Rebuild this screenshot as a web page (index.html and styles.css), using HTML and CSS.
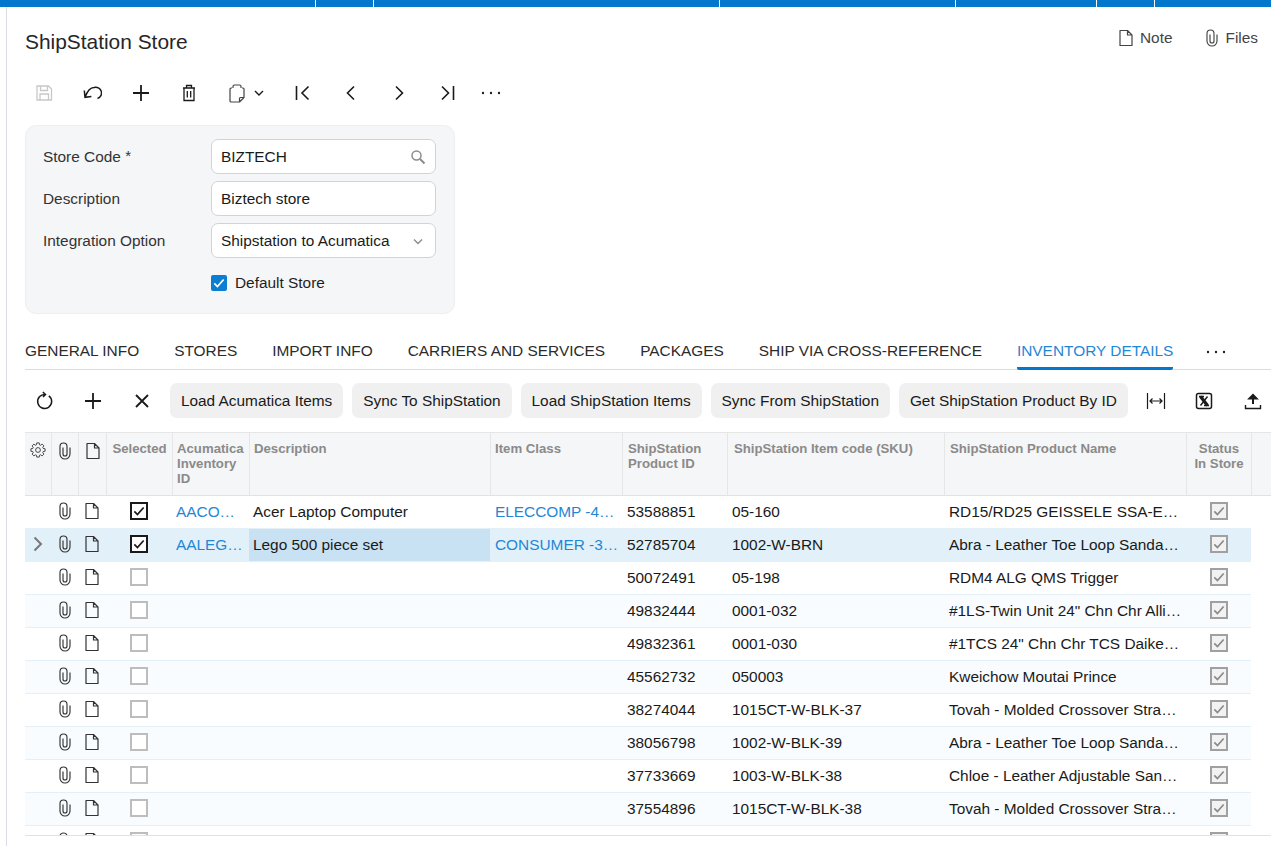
FILE: index.html
```html
<!DOCTYPE html>
<html lang="en">
<head>
<meta charset="UTF-8">
<title>ShipStation Store</title>
<link rel="stylesheet" href="styles.css">
</head>
<body>

<svg class="sprite" width="0" height="0">
  <symbol id="i-clip" viewBox="0 0 16 18"><path d="M13 5.500V12a5 5 0 0 1-10 0V4.500a3.500 3.500 0 0 1 7 0V12a2 2 0 0 1-4 0V5.500" fill="none" stroke="currentColor" stroke-width="1.150"/></symbol>
  <symbol id="i-file" viewBox="0 0 16 18"><path d="M2 1.500h7.500l4.500 4.500v10.500H2zM9.500 1.500V6H14" fill="none" stroke="currentColor" stroke-width="1.200" stroke-linejoin="round"/></symbol>
  <symbol id="i-check" viewBox="0 0 18 18"><path d="M3 9.500l4 4 8-9" fill="none" stroke="currentColor" stroke-width="2.200"/></symbol>
  <symbol id="i-dots" viewBox="0 0 20 4"><circle cx="2" cy="2" r="1.200"/><circle cx="10" cy="2" r="1.200"/><circle cx="18" cy="2" r="1.200"/></symbol>
</svg>

<div class="topbar">
  <span></span><span></span><span></span><span></span><span></span><span></span><span></span>
</div>

<div class="page">

  <!-- titulo -->
  <div class="title-row">
    <h1>ShipStation Store</h1>
    <div class="title-links">
      <a><svg class="ico16"><use href="#i-file"/></svg>Note</a>
      <a><svg class="ico16"><use href="#i-clip"/></svg>Files</a>
    </div>
  </div>

  <div class="main-toolbar">
    <button class="tool disabled"><svg viewBox="0 0 20 20"><path d="M3 3h11.500l3 3v11H3zM6.500 3v4.500h7V3M6 17v-6h8.500v6" fill="none" stroke="currentColor" stroke-width="1.300"/></svg></button>
    <button class="tool"><svg viewBox="0 0 20 20"><path d="M2.300 7.500l.7 6.800 6.400-.8M3 14.300C5 9 8.500 4.500 12 4.500a5.500 5.500 0 0 1 3.500 11" fill="none" stroke="currentColor" stroke-width="1.500"/></svg></button>
    <button class="tool"><svg viewBox="0 0 20 20"><path d="M10 2v16M2 10h16" fill="none" stroke="currentColor" stroke-width="1.800"/></svg></button>
    <button class="tool"><svg viewBox="0 0 20 20"><path d="M4 5h12M7.500 5V2.500h5V5M5 5v12.500h10V5M8.300 8v6.500M11.700 8v6.500" fill="none" stroke="currentColor" stroke-width="1.300"/></svg></button>
    <button class="tool tool-wide"><svg viewBox="0 0 20 20"><path d="M5 5H4a1 1 0 0 0-1 1v12a1 1 0 0 0 1 1h8.500L17 14.500V6a1 1 0 0 0-1-1h-1M6 5V3.500A1.500 1.500 0 0 1 7.500 2h5A1.500 1.500 0 0 1 14 3.500V5M17 14.500h-3.500a1 1 0 0 0-1 1V19" fill="none" stroke="#444" stroke-width="1.200" stroke-linejoin="round"/></svg><svg class="chev" viewBox="0 0 10 10"><path d="M1 3l4 4 4-4" fill="none" stroke="currentColor" stroke-width="1.400"/></svg></button>
    <button class="tool"><svg viewBox="0 0 20 20"><path d="M3.500 3v14M15.500 3.500L9 10l6.500 6.500" fill="none" stroke="currentColor" stroke-width="1.600"/></svg></button>
    <button class="tool"><svg viewBox="0 0 20 20"><path d="M13 3.500L6.500 10l6.500 6.500" fill="none" stroke="currentColor" stroke-width="1.600"/></svg></button>
    <button class="tool"><svg viewBox="0 0 20 20"><path d="M7 3.500l6.500 6.500L7 16.500" fill="none" stroke="currentColor" stroke-width="1.600"/></svg></button>
    <button class="tool"><svg viewBox="0 0 20 20"><path d="M15.500 3v14M4 3.500l6.500 6.500L4 16.500" fill="none" stroke="currentColor" stroke-width="1.600"/></svg></button>
    <button class="tool tool-more"><svg class="dots"><use href="#i-dots"/></svg></button>
  </div>

  <!-- cabecalho do formulario -->
  <div class="form-panel">
    <div class="form-row">
      <label>Store Code <sup>*</sup></label>
      <div class="field"><span>BIZTECH</span>
        <svg class="field-ico" viewBox="0 0 16 16"><circle cx="6.500" cy="6.500" r="4.500" fill="none" stroke="#8c8c8c" stroke-width="1.500"/><path d="M10 10l4.500 4.500" stroke="#8c8c8c" stroke-width="2"/></svg>
      </div>
    </div>
    <div class="form-row">
      <label>Description</label>
      <div class="field"><span>Biztech store</span></div>
    </div>
    <div class="form-row">
      <label>Integration Option</label>
      <div class="field"><span>Shipstation to Acumatica</span>
        <svg class="field-ico" viewBox="0 0 16 16"><path d="M4 6.500l4 4 4-4" fill="none" stroke="#8c8c8c" stroke-width="1.400"/></svg>
      </div>
    </div>
    <div class="form-row check-row">
      <span class="blue-check"><svg viewBox="0 0 18 18"><use href="#i-check"/></svg></span>
      <span>Default Store</span>
    </div>
  </div>

  <div class="tabs">
    <a>GENERAL INFO</a>
    <a>STORES</a>
    <a>IMPORT INFO</a>
    <a>CARRIERS AND SERVICES</a>
    <a>PACKAGES</a>
    <a>SHIP VIA CROSS-REFERENCE</a>
    <a class="active">INVENTORY DETAILS</a>
    <svg class="dots tabs-more"><use href="#i-dots"/></svg>
  </div>

  <div class="grid-toolbar">
    <button class="tool"><svg viewBox="0 0 20 20"><path d="M13.800 4.800A7 7 0 1 1 10.500 3.500M7.800 1l2.700 2.500L8 6" fill="none" stroke="currentColor" stroke-width="1.500"/></svg></button>
    <button class="tool"><svg viewBox="0 0 20 20"><path d="M10 2v16M2 10h16" fill="none" stroke="currentColor" stroke-width="1.800"/></svg></button>
    <button class="tool"><svg viewBox="0 0 20 20"><path d="M4 4l12 12M16 4L4 16" fill="none" stroke="currentColor" stroke-width="1.800"/></svg></button>
    <button class="btn first">Load Acumatica Items</button>
    <button class="btn">Sync To ShipStation</button>
    <button class="btn">Load ShipStation Items</button>
    <button class="btn">Sync From ShipStation</button>
    <button class="btn">Get ShipStation Product By ID</button>
    <button class="tool after"><svg viewBox="0 0 20 20"><path d="M1.500 2v16M18.500 2v16M4 10h12M6.500 7.500L4 10l2.500 2.500M13.500 7.500L16 10l-2.500 2.500" fill="none" stroke="currentColor" stroke-width="1.200"/></svg></button>
    <button class="tool"><svg viewBox="0 0 20 20"><rect x="2.500" y="2.500" width="15" height="15" rx="2" fill="none" stroke="currentColor" stroke-width="1.500"/><path d="M6.500 5.500l7 9" stroke="currentColor" stroke-width="3.200"/><path d="M13.500 5.500l-7 9M5 5.500h5M10 14.500h5" stroke="currentColor" stroke-width="1.400"/></svg></button>
    <button class="tool"><svg viewBox="0 0 20 20"><path d="M10 13V4M6.500 7.500L10 4l3.500 3.500z" fill="currentColor" stroke="currentColor" stroke-width="2"/><path d="M2.500 14v3.500h15V14" fill="none" stroke="currentColor" stroke-width="1.400"/></svg></button>
  </div>

  <div class="grid-wrap">
    <table class="grid">
      <colgroup>
        <col class="c-icon"><col class="c-clip"><col class="c-note"><col class="c-sel"><col class="c-inv"><col class="c-desc"><col class="c-class"><col class="c-pid"><col class="c-sku"><col class="c-name"><col class="c-status"><col>
      </colgroup>
      <thead>
        <tr>
          <th class="center"><svg class="gear" viewBox="0 0 20 20"><circle cx="10" cy="10" r="3" fill="none" stroke="currentColor" stroke-width="1.100"/><path d="M8.120 3.460L8.440 1.140H11.560L11.880 3.460L13.300 4.050L15.160 2.630L17.370 4.840L15.950 6.700L16.540 8.120L18.860 8.440V11.560L16.540 11.880L15.950 13.300L17.370 15.160L15.160 17.370L13.300 15.950L11.880 16.540L11.560 18.860H8.440L8.120 16.540L6.700 15.950L4.840 17.370L2.630 15.160L4.050 13.300L3.460 11.880L1.140 11.560V8.440L3.460 8.120L4.050 6.700L2.630 4.840L4.840 2.630L6.700 4.050z" fill="none" stroke="currentColor" stroke-width="1.100" stroke-linejoin="round"/></svg></th>
          <th class="center"><svg class="ico16"><use href="#i-clip"/></svg></th>
          <th class="center"><svg class="ico16"><use href="#i-file"/></svg></th>
          <th class="center">Selected</th>
          <th>Acumatica Inventory ID</th>
          <th>Description</th>
          <th>Item Class</th>
          <th>ShipStation Product ID</th>
          <th>ShipStation Item code (SKU)</th>
          <th>ShipStation Product Name</th>
          <th class="center">Status<br>In Store</th>
          <th></th>
        </tr>
      </thead>
      <tbody>
        <tr>
          <td></td><td class="center"><svg class="ico16"><use href="#i-clip"/></svg></td><td class="center"><svg class="ico16"><use href="#i-file"/></svg></td>
          <td class="center"><span class="cb on"><svg viewBox="0 0 18 18"><use href="#i-check"/></svg></span></td>
          <td class="link">AACO…</td><td>Acer Laptop Computer</td><td class="link">ELECCOMP -4…</td>
          <td>53588851</td><td>05-160</td><td>RD15/RD25 GEISSELE SSA-E…</td>
          <td class="center"><span class="cb ro"><svg viewBox="0 0 18 18"><use href="#i-check"/></svg></span></td>
        </tr>
        <tr class="current">
          <td class="center"><svg class="row-arrow" viewBox="0 0 12 18"><path d="M2.500 2.500L9 9l-6.500 6.500" fill="none" stroke="currentColor" stroke-width="2"/></svg></td><td class="center"><svg class="ico16"><use href="#i-clip"/></svg></td><td class="center"><svg class="ico16"><use href="#i-file"/></svg></td>
          <td class="center"><span class="cb on"><svg viewBox="0 0 18 18"><use href="#i-check"/></svg></span></td>
          <td class="link">AALEG…</td><td class="active-cell">Lego 500 piece set</td><td class="link">CONSUMER -3…</td>
          <td>52785704</td><td>1002-W-BRN</td><td>Abra - Leather Toe Loop Sanda…</td>
          <td class="center"><span class="cb ro"><svg viewBox="0 0 18 18"><use href="#i-check"/></svg></span></td>
        </tr>
        <tr>
          <td></td><td class="center"><svg class="ico16"><use href="#i-clip"/></svg></td><td class="center"><svg class="ico16"><use href="#i-file"/></svg></td>
          <td class="center"><span class="cb"></span></td><td></td><td></td><td></td>
          <td>50072491</td><td>05-198</td><td>RDM4 ALG QMS Trigger</td>
          <td class="center"><span class="cb ro"><svg viewBox="0 0 18 18"><use href="#i-check"/></svg></span></td>
        </tr>
        <tr class="alt">
          <td></td><td class="center"><svg class="ico16"><use href="#i-clip"/></svg></td><td class="center"><svg class="ico16"><use href="#i-file"/></svg></td>
          <td class="center"><span class="cb"></span></td><td></td><td></td><td></td>
          <td>49832444</td><td>0001-032</td><td>#1LS-Twin Unit 24" Chn Chr Alli…</td>
          <td class="center"><span class="cb ro"><svg viewBox="0 0 18 18"><use href="#i-check"/></svg></span></td>
        </tr>
        <tr>
          <td></td><td class="center"><svg class="ico16"><use href="#i-clip"/></svg></td><td class="center"><svg class="ico16"><use href="#i-file"/></svg></td>
          <td class="center"><span class="cb"></span></td><td></td><td></td><td></td>
          <td>49832361</td><td>0001-030</td><td>#1TCS 24" Chn Chr TCS Daike…</td>
          <td class="center"><span class="cb ro"><svg viewBox="0 0 18 18"><use href="#i-check"/></svg></span></td>
        </tr>
        <tr class="alt">
          <td></td><td class="center"><svg class="ico16"><use href="#i-clip"/></svg></td><td class="center"><svg class="ico16"><use href="#i-file"/></svg></td>
          <td class="center"><span class="cb"></span></td><td></td><td></td><td></td>
          <td>45562732</td><td>050003</td><td>Kweichow Moutai Prince</td>
          <td class="center"><span class="cb ro"><svg viewBox="0 0 18 18"><use href="#i-check"/></svg></span></td>
        </tr>
        <tr>
          <td></td><td class="center"><svg class="ico16"><use href="#i-clip"/></svg></td><td class="center"><svg class="ico16"><use href="#i-file"/></svg></td>
          <td class="center"><span class="cb"></span></td><td></td><td></td><td></td>
          <td>38274044</td><td>1015CT-W-BLK-37</td><td>Tovah - Molded Crossover Stra…</td>
          <td class="center"><span class="cb ro"><svg viewBox="0 0 18 18"><use href="#i-check"/></svg></span></td>
        </tr>
        <tr class="alt">
          <td></td><td class="center"><svg class="ico16"><use href="#i-clip"/></svg></td><td class="center"><svg class="ico16"><use href="#i-file"/></svg></td>
          <td class="center"><span class="cb"></span></td><td></td><td></td><td></td>
          <td>38056798</td><td>1002-W-BLK-39</td><td>Abra - Leather Toe Loop Sanda…</td>
          <td class="center"><span class="cb ro"><svg viewBox="0 0 18 18"><use href="#i-check"/></svg></span></td>
        </tr>
        <tr>
          <td></td><td class="center"><svg class="ico16"><use href="#i-clip"/></svg></td><td class="center"><svg class="ico16"><use href="#i-file"/></svg></td>
          <td class="center"><span class="cb"></span></td><td></td><td></td><td></td>
          <td>37733669</td><td>1003-W-BLK-38</td><td>Chloe - Leather Adjustable San…</td>
          <td class="center"><span class="cb ro"><svg viewBox="0 0 18 18"><use href="#i-check"/></svg></span></td>
        </tr>
        <tr class="alt">
          <td></td><td class="center"><svg class="ico16"><use href="#i-clip"/></svg></td><td class="center"><svg class="ico16"><use href="#i-file"/></svg></td>
          <td class="center"><span class="cb"></span></td><td></td><td></td><td></td>
          <td>37554896</td><td>1015CT-W-BLK-38</td><td>Tovah - Molded Crossover Stra…</td>
          <td class="center"><span class="cb ro"><svg viewBox="0 0 18 18"><use href="#i-check"/></svg></span></td>
        </tr>
        <tr>
          <td></td><td class="center"><svg class="ico16"><use href="#i-clip"/></svg></td><td class="center"><svg class="ico16"><use href="#i-file"/></svg></td>
          <td class="center"><span class="cb"></span></td><td></td><td></td><td></td>
          <td></td><td></td><td></td>
          <td class="center"><span class="cb ro"><svg viewBox="0 0 18 18"><use href="#i-check"/></svg></span></td>
        </tr>
      </tbody>
    </table>
  </div>

</div>

</body>
</html>
```

FILE: styles.css
```css
* { box-sizing: border-box; }
html, body { margin: 0; height: 846px; overflow: hidden; }
body { font-family: "Liberation Sans", Arial, sans-serif; font-size: 15.400px; color: #1f1f1f; background: white; }
.sprite { position: absolute; }
svg { display: block; }
button { font: inherit; color: inherit; background: none; border: none; padding: 0; }

.topbar { display: grid; grid-template-columns: 316px 58px 346px 236px 141px 58px 1fr; height: 7px; }
.topbar span { background: #0277cc; border-right: 1px solid white; }
.topbar span:last-child { border-right: none; }

.page { height: 839px; margin-left: 6px; border-left: 1px solid #dadce6; padding-left: 18px; display: flex; flex-direction: column; }

.title-row { height: 54px; padding-top: 21px; display: flex; justify-content: space-between; }
h1 { margin: 0; font-size: 20.900px; font-weight: normal; line-height: 28px; color: #262626; }
.title-links { display: flex; gap: 31px; padding: 0 13px 0 0; height: 20px; color: #444; }
.title-links a { display: flex; align-items: center; gap: 6px; }
.ico16 { width: 16px; height: 18px; }
.dots { width: 20px; height: 4px; fill: #222; }

.main-toolbar { height: 64px; display: flex; align-items: center; margin-left: -5px; }
.tool { width: 48.300px; height: 24px; display: flex; align-items: center; justify-content: center; color: #1a1a1a; flex: none; }
.tool svg { width: 20px; height: 20px; }
.tool.disabled { color: #c8c8c8; }
.tool svg.chev { width: 10px; height: 10px; margin-left: 7px; }
.tool-wide { width: 65.500px; padding-left: 14px; justify-content: flex-start; }
.tool svg.dots { width: 20px; height: 4px; }
.tool-more { width: 38px; }

.form-panel { width: 430px; height: 189px; background: #f5f6f8; border: 1px solid #eeeff1; border-radius: 11px; padding: 13px 18px 0 17px; flex: none; }
.form-row { display: flex; align-items: center; height: 35px; margin-bottom: 7px; }
.form-row label { width: 168px; flex: none; color: #333; }
.form-row sup { font-size: 15px; line-height: 0; vertical-align: 1px; }
.field { width: 225px; height: 35px; background: white; border: 1px solid #d2d3d6; border-radius: 7px; padding: 0 9px; display: flex; align-items: center; justify-content: space-between; color: #1a1a1a; flex: none; }
.field-ico { width: 16px; height: 16px; flex: none; }
.check-row { padding-left: 168px; margin-top: 15px; height: 20px; gap: 8px; }
.blue-check { width: 16px; height: 16px; background: #0b7ed2; border-radius: 2px; color: white; padding: 1px; }
.blue-check svg { width: 14px; height: 14px; }

.tabs { margin-top: 18px; height: 38px; width: 1246px; border-bottom: 1px solid #dcdcdc; display: flex; gap: 35px; flex: none; font-size: 15.410px; }
.tabs a { height: 38px; line-height: 38px; color: #2b2b2b; white-space: nowrap; }
.tabs a.active { color: #1f87d6; border-bottom: 3px solid #0277cc; border-radius: 2px; }
.tabs-more { margin-top: 18px; margin-left: -2px; }

.grid-toolbar { height: 62px; padding-bottom: 1px; display: flex; align-items: center; flex: none; margin-left: -4px; }
.btn { height: 35px; padding: 0 11px; background: #f0f0f0; border-radius: 7px; margin-right: 8.900px; color: #1a1a1a; white-space: nowrap; flex: none; }
.btn.first { margin-left: 4px; }
.tool.after { margin-left: -5px; }

.grid-wrap { height: 404px; width: 1246px; overflow: hidden; border-bottom: 1px solid #e2e2e2; flex: none; }
.grid { table-layout: fixed; border-collapse: separate; border-spacing: 0; width: 1246px; }
.c-icon { width: 26px; }
.c-clip { width: 27px; }
.c-note { width: 28px; }
.c-sel { width: 66px; }
.c-inv { width: 77px; }
.c-desc { width: 241px; }
.c-class { width: 132px; }
.c-pid { width: 105px; }
.c-sku { width: 217px; }
.c-name { width: 242px; }
.c-status { width: 65px; }

th { height: 64px; background: #f5f6f8; border-top: 1px solid #e6e6e6; border-bottom: 1px solid #e2e2e2; border-left: 1px solid #e6e6e6; vertical-align: top; text-align: left; padding: 8px 2px 0 4px; font-size: 13.200px; line-height: 15px; color: #8a8a8a; font-weight: bold; }
th:first-child { border-left: none; }
th svg { color: #333; margin: 1px auto 0; }
th:nth-child(8), th:nth-child(10) { padding-left: 5px; }
th:nth-child(9) { padding-left: 6px; }
.gear { width: 16px; height: 16px; }
td { height: 33px; padding: 0 4px; border-bottom: 1px solid #e4f0f8; white-space: nowrap; overflow: hidden; color: #1a1a1a; }
td:nth-child(n+7):nth-child(-n+10) { padding-left: 5px; }
td svg { margin: 0 auto; color: #333; }
th.center, td.center { text-align: center; padding: 0; }
td.center { padding-bottom: 2px; }
th.center { padding-top: 8px; }
td.link { color: #1f87d6; }
tr.alt td { background: #f9fcfe; }
tr.current td { background: #e2f0f9; }
tr.current td.active-cell { background: #c8e1f3; }
.row-arrow { width: 12px; height: 18px; color: #777; }

.cb { width: 18px; height: 18px; display: block; margin: 0 auto; border: 2px solid #bdbdbd; background: white; }
.cb svg { width: 14px; height: 14px; }
.cb.on { border-color: #1a1a1a; }
.cb.on svg { color: #1a1a1a; }
.cb.ro { border-color: #a0a0a0; background: #f2f2f2; }
.cb.ro svg { color: #8a8a8a; }
```
